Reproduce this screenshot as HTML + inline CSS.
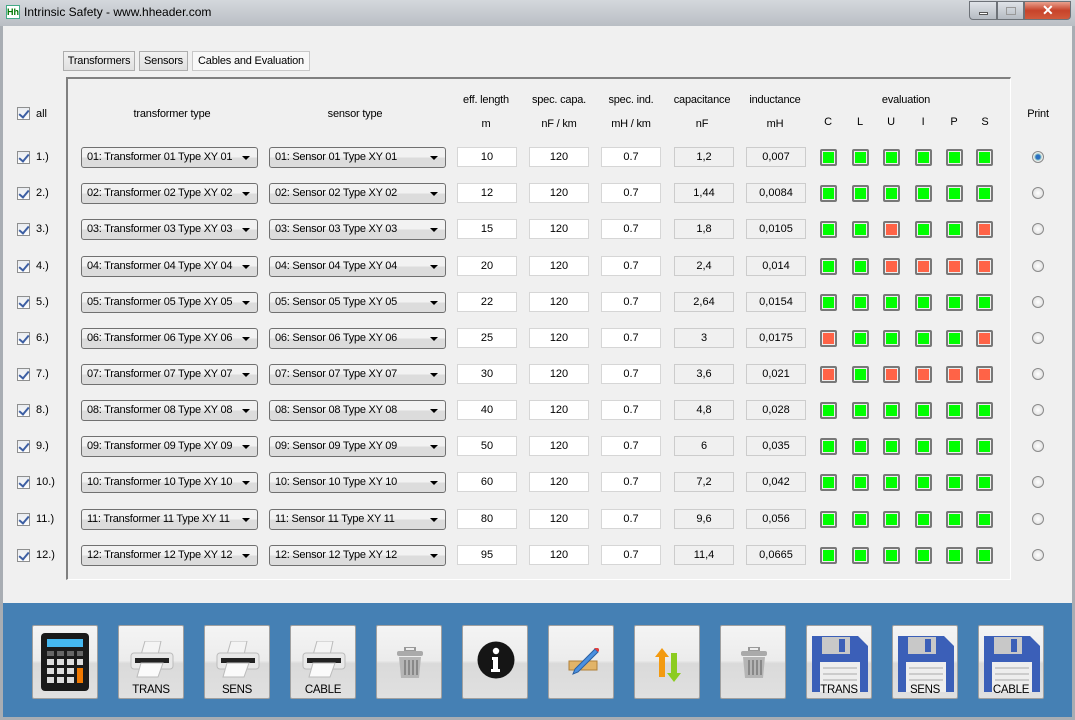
<!DOCTYPE html>
<html><head><meta charset="utf-8"><style>
*{box-sizing:border-box;margin:0;padding:0}
body{width:1075px;height:720px;overflow:hidden;font-family:"Liberation Sans",sans-serif;font-size:12px;color:#000;background:#f0f0f0;position:relative}
.a{position:absolute}
#tb{left:0;top:0;width:1075px;height:26px;background:linear-gradient(#d4d8dc,#b9bec4);}
#frame{left:0;top:26px;width:1075px;height:694px;border:3px solid #a8adb3;border-top:none;background:#f0f0f0}
.tab{top:51px;height:20px;border:1px solid #adadad;background:linear-gradient(#f2f2f2,#e0e0e0);font-size:11px;line-height:18px;text-align:center;letter-spacing:-0.2px}
#panel{left:66px;top:77px;width:945px;height:503px;border-left:2px solid #808080;border-top:2px solid #808080;border-right:1px solid #fff;border-bottom:1px solid #fff}
.h{font-size:11px;text-align:center;width:80px;letter-spacing:-0.2px}
.cb{width:13px;height:13px;border:1px solid #8e8f8f;background:linear-gradient(#e9ecf0,#fdfdfd)}
.cb:after{content:"";position:absolute;left:3px;top:0px;width:4px;height:8px;border:solid #3d5fa3;border-width:0 2px 2px 0;transform:rotate(40deg)}
.lb{font-size:11px}
.combo{height:21px;border:1px solid #707070;border-radius:3px;background:linear-gradient(#f2f2f2 50%,#dcdcdc 50%);font-size:11px;line-height:19px;padding-left:5px;width:177px;letter-spacing:-0.25px;white-space:nowrap}
.combo:after{content:"";position:absolute;right:7px;top:8px;border:4px solid transparent;border-top:4px solid #000;border-bottom:none}
.tx{height:20px;width:60px;border:1px solid #d6d6d6;background:#fff;text-align:center;line-height:18px;font-size:11px}
.ro{background:#f0f0f0;border-color:#ccc}
.ev{width:17px;height:17px;border:2px solid #787878;border-radius:2px;padding:1px;background:#eee}
.ev i{display:block;width:11px;height:11px;background:#00ff00}
.ev.r i{background:#ff6347}
.rd{width:12px;height:12px;border-radius:50%;border:1px solid #8a8a8a;background:radial-gradient(#fff,#d8d8d8)}
#blue{left:3px;top:603px;width:1069px;height:114px;background:#4580b4}
.btn{top:625px;width:66px;height:74px;border:1px solid #a0a0a0;border-radius:2px;background:linear-gradient(#f4f4f4 0,#ececec 48%,#dadada 52%,#e0e0e0 100%)}
.bl{position:absolute;bottom:2px;width:100%;text-align:center;font-size:11.5px;letter-spacing:-0.3px}
</style></head><body>
<div class="a" id="tb"></div>
<div class="a" style="left:6px;top:5px;width:14px;height:14px;background:#fff;border:1px solid #4a8;font-size:9px;line-height:12px;color:#070;text-align:center;font-weight:bold">Hh</div>
<div class="a" style="left:24px;top:5px;font-size:12px;">Intrinsic Safety - www.hheader.com</div>
<div class="a" style="left:969px;top:1px;width:28px;height:19px;border:1px solid #6d7278;border-radius:0 0 0 4px;background:linear-gradient(#dfe3e8,#b5bbc2)"><div class="a" style="left:9px;top:10px;width:9px;height:3px;background:#fff;border:1px solid #555"></div></div>
<div class="a" style="left:997px;top:1px;width:27px;height:19px;border:1px solid #6d7278;background:linear-gradient(#dfe3e8,#b5bbc2)"><div class="a" style="left:8px;top:5px;width:10px;height:8px;border:1px solid #999"></div></div>
<div class="a" style="left:1024px;top:1px;width:47px;height:19px;border:1px solid #6d7278;border-radius:0 0 4px 0;background:linear-gradient(#e9a08e,#c7432a 50%,#d15a3c)"><div class="a" style="left:17px;top:0px;color:#fff;font-weight:bold;font-size:14px">✕</div></div>
<div class="a" id="frame"></div>

<div class="a tab" style="left:63px;width:72px">Transformers</div>
<div class="a tab" style="left:139px;width:49px">Sensors</div>
<div class="a tab" style="left:192px;width:118px;background:#f8f8f8;border-color:#c8c8c8">Cables and Evaluation</div>
<div class="a" id="panel"></div>

<div class="a cb" style="left:17px;top:107px"></div><div class="a lb" style="left:36px;top:108px">all</div>
<div class="a h" style="left:122px;top:108px;width:100px">transformer type</div>
<div class="a h" style="left:305px;top:108px;width:100px">sensor type</div>
<div class="a h" style="left:446px;top:94px">eff. length</div><div class="a h" style="left:446px;top:118px">m</div>
<div class="a h" style="left:519px;top:94px">spec. capa.</div><div class="a h" style="left:519px;top:118px">nF / km</div>
<div class="a h" style="left:591px;top:94px">spec. ind.</div><div class="a h" style="left:591px;top:118px">mH / km</div>
<div class="a h" style="left:662px;top:94px">capacitance</div><div class="a h" style="left:662px;top:118px">nF</div>
<div class="a h" style="left:735px;top:94px">inductance</div><div class="a h" style="left:735px;top:118px">mH</div>
<div class="a h" style="left:866px;top:94px">evaluation</div>
<div class="a h" style="left:788px;top:116px">C</div><div class="a h" style="left:820px;top:116px">L</div><div class="a h" style="left:851px;top:116px">U</div><div class="a h" style="left:883px;top:116px">I</div><div class="a h" style="left:914px;top:116px">P</div><div class="a h" style="left:945px;top:116px">S</div>
<div class="a h" style="left:998px;top:108px">Print</div>

<!-- rows -->
<div class="a" style="left:0;top:147px;width:1075px;height:22px">
<div class="a cb" style="left:17px;top:4px"></div><div class="a lb" style="left:36px;top:4px">1.)</div>
<div class="a combo" style="left:81px">01: Transformer 01 Type XY 01</div><div class="a combo" style="left:269px">01: Sensor 01 Type XY 01</div>
<div class="a tx" style="left:457px">10</div><div class="a tx" style="left:529px">120</div><div class="a tx" style="left:601px">0.7</div><div class="a tx ro" style="left:674px">1,2</div><div class="a tx ro" style="left:746px">0,007</div>
<div class="a ev" style="left:820px;top:2px"><i></i></div><div class="a ev" style="left:852px;top:2px"><i></i></div><div class="a ev" style="left:883px;top:2px"><i></i></div><div class="a ev" style="left:915px;top:2px"><i></i></div><div class="a ev" style="left:946px;top:2px"><i></i></div><div class="a ev" style="left:976px;top:2px"><i></i></div>
<div class="a rd" style="left:1032px;top:4px;background:radial-gradient(#2a6fc0 30%,#9cc 45%,#eee 60%)"></div></div>

<div class="a" style="left:0;top:183px;width:1075px;height:22px">
<div class="a cb" style="left:17px;top:4px"></div><div class="a lb" style="left:36px;top:4px">2.)</div>
<div class="a combo" style="left:81px">02: Transformer 02 Type XY 02</div><div class="a combo" style="left:269px">02: Sensor 02 Type XY 02</div>
<div class="a tx" style="left:457px">12</div><div class="a tx" style="left:529px">120</div><div class="a tx" style="left:601px">0.7</div><div class="a tx ro" style="left:674px">1,44</div><div class="a tx ro" style="left:746px">0,0084</div>
<div class="a ev" style="left:820px;top:2px"><i></i></div><div class="a ev" style="left:852px;top:2px"><i></i></div><div class="a ev" style="left:883px;top:2px"><i></i></div><div class="a ev" style="left:915px;top:2px"><i></i></div><div class="a ev" style="left:946px;top:2px"><i></i></div><div class="a ev" style="left:976px;top:2px"><i></i></div>
<div class="a rd" style="left:1032px;top:4px"></div></div>

<div class="a" style="left:0;top:219px;width:1075px;height:22px">
<div class="a cb" style="left:17px;top:4px"></div><div class="a lb" style="left:36px;top:4px">3.)</div>
<div class="a combo" style="left:81px">03: Transformer 03 Type XY 03</div><div class="a combo" style="left:269px">03: Sensor 03 Type XY 03</div>
<div class="a tx" style="left:457px">15</div><div class="a tx" style="left:529px">120</div><div class="a tx" style="left:601px">0.7</div><div class="a tx ro" style="left:674px">1,8</div><div class="a tx ro" style="left:746px">0,0105</div>
<div class="a ev" style="left:820px;top:2px"><i></i></div><div class="a ev" style="left:852px;top:2px"><i></i></div><div class="a ev r" style="left:883px;top:2px"><i></i></div><div class="a ev" style="left:915px;top:2px"><i></i></div><div class="a ev" style="left:946px;top:2px"><i></i></div><div class="a ev r" style="left:976px;top:2px"><i></i></div>
<div class="a rd" style="left:1032px;top:4px"></div></div>

<div class="a" style="left:0;top:256px;width:1075px;height:22px">
<div class="a cb" style="left:17px;top:4px"></div><div class="a lb" style="left:36px;top:4px">4.)</div>
<div class="a combo" style="left:81px">04: Transformer 04 Type XY 04</div><div class="a combo" style="left:269px">04: Sensor 04 Type XY 04</div>
<div class="a tx" style="left:457px">20</div><div class="a tx" style="left:529px">120</div><div class="a tx" style="left:601px">0.7</div><div class="a tx ro" style="left:674px">2,4</div><div class="a tx ro" style="left:746px">0,014</div>
<div class="a ev" style="left:820px;top:2px"><i></i></div><div class="a ev" style="left:852px;top:2px"><i></i></div><div class="a ev r" style="left:883px;top:2px"><i></i></div><div class="a ev r" style="left:915px;top:2px"><i></i></div><div class="a ev r" style="left:946px;top:2px"><i></i></div><div class="a ev r" style="left:976px;top:2px"><i></i></div>
<div class="a rd" style="left:1032px;top:4px"></div></div>

<div class="a" style="left:0;top:292px;width:1075px;height:22px">
<div class="a cb" style="left:17px;top:4px"></div><div class="a lb" style="left:36px;top:4px">5.)</div>
<div class="a combo" style="left:81px">05: Transformer 05 Type XY 05</div><div class="a combo" style="left:269px">05: Sensor 05 Type XY 05</div>
<div class="a tx" style="left:457px">22</div><div class="a tx" style="left:529px">120</div><div class="a tx" style="left:601px">0.7</div><div class="a tx ro" style="left:674px">2,64</div><div class="a tx ro" style="left:746px">0,0154</div>
<div class="a ev" style="left:820px;top:2px"><i></i></div><div class="a ev" style="left:852px;top:2px"><i></i></div><div class="a ev" style="left:883px;top:2px"><i></i></div><div class="a ev" style="left:915px;top:2px"><i></i></div><div class="a ev" style="left:946px;top:2px"><i></i></div><div class="a ev" style="left:976px;top:2px"><i></i></div>
<div class="a rd" style="left:1032px;top:4px"></div></div>

<div class="a" style="left:0;top:328px;width:1075px;height:22px">
<div class="a cb" style="left:17px;top:4px"></div><div class="a lb" style="left:36px;top:4px">6.)</div>
<div class="a combo" style="left:81px">06: Transformer 06 Type XY 06</div><div class="a combo" style="left:269px">06: Sensor 06 Type XY 06</div>
<div class="a tx" style="left:457px">25</div><div class="a tx" style="left:529px">120</div><div class="a tx" style="left:601px">0.7</div><div class="a tx ro" style="left:674px">3</div><div class="a tx ro" style="left:746px">0,0175</div>
<div class="a ev r" style="left:820px;top:2px"><i></i></div><div class="a ev" style="left:852px;top:2px"><i></i></div><div class="a ev" style="left:883px;top:2px"><i></i></div><div class="a ev" style="left:915px;top:2px"><i></i></div><div class="a ev" style="left:946px;top:2px"><i></i></div><div class="a ev r" style="left:976px;top:2px"><i></i></div>
<div class="a rd" style="left:1032px;top:4px"></div></div>

<div class="a" style="left:0;top:364px;width:1075px;height:22px">
<div class="a cb" style="left:17px;top:4px"></div><div class="a lb" style="left:36px;top:4px">7.)</div>
<div class="a combo" style="left:81px">07: Transformer 07 Type XY 07</div><div class="a combo" style="left:269px">07: Sensor 07 Type XY 07</div>
<div class="a tx" style="left:457px">30</div><div class="a tx" style="left:529px">120</div><div class="a tx" style="left:601px">0.7</div><div class="a tx ro" style="left:674px">3,6</div><div class="a tx ro" style="left:746px">0,021</div>
<div class="a ev r" style="left:820px;top:2px"><i></i></div><div class="a ev" style="left:852px;top:2px"><i></i></div><div class="a ev r" style="left:883px;top:2px"><i></i></div><div class="a ev r" style="left:915px;top:2px"><i></i></div><div class="a ev r" style="left:946px;top:2px"><i></i></div><div class="a ev r" style="left:976px;top:2px"><i></i></div>
<div class="a rd" style="left:1032px;top:4px"></div></div>

<div class="a" style="left:0;top:400px;width:1075px;height:22px">
<div class="a cb" style="left:17px;top:4px"></div><div class="a lb" style="left:36px;top:4px">8.)</div>
<div class="a combo" style="left:81px">08: Transformer 08 Type XY 08</div><div class="a combo" style="left:269px">08: Sensor 08 Type XY 08</div>
<div class="a tx" style="left:457px">40</div><div class="a tx" style="left:529px">120</div><div class="a tx" style="left:601px">0.7</div><div class="a tx ro" style="left:674px">4,8</div><div class="a tx ro" style="left:746px">0,028</div>
<div class="a ev" style="left:820px;top:2px"><i></i></div><div class="a ev" style="left:852px;top:2px"><i></i></div><div class="a ev" style="left:883px;top:2px"><i></i></div><div class="a ev" style="left:915px;top:2px"><i></i></div><div class="a ev" style="left:946px;top:2px"><i></i></div><div class="a ev" style="left:976px;top:2px"><i></i></div>
<div class="a rd" style="left:1032px;top:4px"></div></div>

<div class="a" style="left:0;top:436px;width:1075px;height:22px">
<div class="a cb" style="left:17px;top:4px"></div><div class="a lb" style="left:36px;top:4px">9.)</div>
<div class="a combo" style="left:81px">09: Transformer 09 Type XY 09</div><div class="a combo" style="left:269px">09: Sensor 09 Type XY 09</div>
<div class="a tx" style="left:457px">50</div><div class="a tx" style="left:529px">120</div><div class="a tx" style="left:601px">0.7</div><div class="a tx ro" style="left:674px">6</div><div class="a tx ro" style="left:746px">0,035</div>
<div class="a ev" style="left:820px;top:2px"><i></i></div><div class="a ev" style="left:852px;top:2px"><i></i></div><div class="a ev" style="left:883px;top:2px"><i></i></div><div class="a ev" style="left:915px;top:2px"><i></i></div><div class="a ev" style="left:946px;top:2px"><i></i></div><div class="a ev" style="left:976px;top:2px"><i></i></div>
<div class="a rd" style="left:1032px;top:4px"></div></div>

<div class="a" style="left:0;top:472px;width:1075px;height:22px">
<div class="a cb" style="left:17px;top:4px"></div><div class="a lb" style="left:36px;top:4px">10.)</div>
<div class="a combo" style="left:81px">10: Transformer 10 Type XY 10</div><div class="a combo" style="left:269px">10: Sensor 10 Type XY 10</div>
<div class="a tx" style="left:457px">60</div><div class="a tx" style="left:529px">120</div><div class="a tx" style="left:601px">0.7</div><div class="a tx ro" style="left:674px">7,2</div><div class="a tx ro" style="left:746px">0,042</div>
<div class="a ev" style="left:820px;top:2px"><i></i></div><div class="a ev" style="left:852px;top:2px"><i></i></div><div class="a ev" style="left:883px;top:2px"><i></i></div><div class="a ev" style="left:915px;top:2px"><i></i></div><div class="a ev" style="left:946px;top:2px"><i></i></div><div class="a ev" style="left:976px;top:2px"><i></i></div>
<div class="a rd" style="left:1032px;top:4px"></div></div>

<div class="a" style="left:0;top:509px;width:1075px;height:22px">
<div class="a cb" style="left:17px;top:4px"></div><div class="a lb" style="left:36px;top:4px">11.)</div>
<div class="a combo" style="left:81px">11: Transformer 11 Type XY 11</div><div class="a combo" style="left:269px">11: Sensor 11 Type XY 11</div>
<div class="a tx" style="left:457px">80</div><div class="a tx" style="left:529px">120</div><div class="a tx" style="left:601px">0.7</div><div class="a tx ro" style="left:674px">9,6</div><div class="a tx ro" style="left:746px">0,056</div>
<div class="a ev" style="left:820px;top:2px"><i></i></div><div class="a ev" style="left:852px;top:2px"><i></i></div><div class="a ev" style="left:883px;top:2px"><i></i></div><div class="a ev" style="left:915px;top:2px"><i></i></div><div class="a ev" style="left:946px;top:2px"><i></i></div><div class="a ev" style="left:976px;top:2px"><i></i></div>
<div class="a rd" style="left:1032px;top:4px"></div></div>

<div class="a" style="left:0;top:545px;width:1075px;height:22px">
<div class="a cb" style="left:17px;top:4px"></div><div class="a lb" style="left:36px;top:4px">12.)</div>
<div class="a combo" style="left:81px">12: Transformer 12 Type XY 12</div><div class="a combo" style="left:269px">12: Sensor 12 Type XY 12</div>
<div class="a tx" style="left:457px">95</div><div class="a tx" style="left:529px">120</div><div class="a tx" style="left:601px">0.7</div><div class="a tx ro" style="left:674px">11,4</div><div class="a tx ro" style="left:746px">0,0665</div>
<div class="a ev" style="left:820px;top:2px"><i></i></div><div class="a ev" style="left:852px;top:2px"><i></i></div><div class="a ev" style="left:883px;top:2px"><i></i></div><div class="a ev" style="left:915px;top:2px"><i></i></div><div class="a ev" style="left:946px;top:2px"><i></i></div><div class="a ev" style="left:976px;top:2px"><i></i></div>
<div class="a rd" style="left:1032px;top:4px"></div></div>

<div class="a" id="blue"></div>
<!-- buttons -->
<div class="a btn" style="left:32px"><svg class="a" style="left:5px;top:6px" width="56" height="62"><rect x="3" y="1" width="48" height="58" rx="4" fill="#1a1a1a"/><rect x="9" y="7" width="36" height="8" fill="#45b8f0"/><g fill="#666"><rect x="9" y="19" width="7" height="5"/><rect x="19" y="19" width="7" height="5"/><rect x="29" y="19" width="7" height="5"/><rect x="39" y="19" width="6" height="5"/></g><g fill="#ddd"><rect x="9" y="27" width="7" height="6"/><rect x="19" y="27" width="7" height="6"/><rect x="29" y="27" width="7" height="6"/><rect x="39" y="27" width="6" height="6"/><rect x="9" y="36" width="7" height="6"/><rect x="19" y="36" width="7" height="6"/><rect x="29" y="36" width="7" height="6"/><rect x="9" y="45" width="7" height="6"/><rect x="19" y="45" width="7" height="6"/><rect x="29" y="45" width="7" height="6"/></g><rect x="39" y="36" width="6" height="15" fill="#f07800"/></svg></div>
<div class="a btn" style="left:118px"><svg class="a" style="left:10px;top:15px" width="46" height="40"><path d="M16 0h16l-3 14H12z" fill="#f4f4f4" stroke="#bbb"/><rect x="2" y="12" width="42" height="16" rx="3" fill="#e8e8e8" stroke="#bbb"/><rect x="6" y="17" width="34" height="5" fill="#222"/><path d="M12 22h22l-5 14H8z" fill="#fafafa" stroke="#bbb"/></svg><div class="bl">TRANS</div></div>
<div class="a btn" style="left:204px"><svg class="a" style="left:10px;top:15px" width="46" height="40"><path d="M16 0h16l-3 14H12z" fill="#f4f4f4" stroke="#bbb"/><rect x="2" y="12" width="42" height="16" rx="3" fill="#e8e8e8" stroke="#bbb"/><rect x="6" y="17" width="34" height="5" fill="#222"/><path d="M12 22h22l-5 14H8z" fill="#fafafa" stroke="#bbb"/></svg><div class="bl">SENS</div></div>
<div class="a btn" style="left:290px"><svg class="a" style="left:10px;top:15px" width="46" height="40"><path d="M16 0h16l-3 14H12z" fill="#f4f4f4" stroke="#bbb"/><rect x="2" y="12" width="42" height="16" rx="3" fill="#e8e8e8" stroke="#bbb"/><rect x="6" y="17" width="34" height="5" fill="#222"/><path d="M12 22h22l-5 14H8z" fill="#fafafa" stroke="#bbb"/></svg><div class="bl">CABLE</div></div>
<div class="a btn" style="left:376px"><svg class="a" style="left:19px;top:21px" width="28" height="32"><rect x="9" y="0" width="10" height="4" fill="none" stroke="#999" stroke-width="2"/><rect x="1" y="4" width="26" height="5" rx="2" fill="#aaa"/><path d="M3 10h22l-2 21H5z" fill="#b5b5b5"/><g stroke="#888" stroke-width="2"><path d="M9 13v15M13 13v15M17 13v15M21 13v15"/></g></svg></div>
<div class="a btn" style="left:462px"><svg class="a" style="left:14px;top:15px" width="38" height="38"><circle cx="19" cy="19" r="18.5" fill="#151515"/><circle cx="19" cy="10" r="3.2" fill="#fff"/><path d="M15 16h6v12h2v3h-9v-3h2v-9h-1z" fill="#fff"/></svg></div>
<div class="a btn" style="left:548px"><svg class="a" style="left:18px;top:22px" width="32" height="30"><rect x="2" y="13" width="28" height="9" fill="#e2b468" stroke="#b0803a"/><path d="M28 1l3 3-20 20-5 2 2-5z" fill="#4a90e0" stroke="#2a5fa0"/><path d="M27 0l4 4 2-2-4-4z" fill="#e04040"/></svg></div>
<div class="a btn" style="left:634px"><svg class="a" style="left:20px;top:22px" width="28" height="34"><path d="M7 0l7 9h-4v20H4V9H0z" fill="#f39a10"/><path d="M19 34l-7-9h4V5h6v20h4z" fill="#8ccc20"/></svg></div>
<div class="a btn" style="left:720px"><svg class="a" style="left:19px;top:21px" width="28" height="32"><rect x="9" y="0" width="10" height="4" fill="none" stroke="#999" stroke-width="2"/><rect x="1" y="4" width="26" height="5" rx="2" fill="#aaa"/><path d="M3 10h22l-2 21H5z" fill="#b5b5b5"/><g stroke="#888" stroke-width="2"><path d="M9 13v15M13 13v15M17 13v15M21 13v15"/></g></svg></div>
<div class="a btn" style="left:806px"><svg class="a" style="left:3px;top:8px" width="60" height="60"><path d="M2 2h46l10 10v46H2z" fill="#3b5fb8"/><rect x="12" y="3" width="28" height="17" fill="#c8c8c8"/><rect x="29" y="5" width="6" height="13" fill="#3b5fb8"/><rect x="10" y="28" width="40" height="30" fill="#eee"/><g stroke="#aaa"><path d="M13 34h34M13 40h34M13 46h34"/></g></svg><div class="bl">TRANS</div></div>
<div class="a btn" style="left:892px"><svg class="a" style="left:3px;top:8px" width="60" height="60"><path d="M2 2h46l10 10v46H2z" fill="#3b5fb8"/><rect x="12" y="3" width="28" height="17" fill="#c8c8c8"/><rect x="29" y="5" width="6" height="13" fill="#3b5fb8"/><rect x="10" y="28" width="40" height="30" fill="#eee"/><g stroke="#aaa"><path d="M13 34h34M13 40h34M13 46h34"/></g></svg><div class="bl">SENS</div></div>
<div class="a btn" style="left:978px"><svg class="a" style="left:3px;top:8px" width="60" height="60"><path d="M2 2h46l10 10v46H2z" fill="#3b5fb8"/><rect x="12" y="3" width="28" height="17" fill="#c8c8c8"/><rect x="29" y="5" width="6" height="13" fill="#3b5fb8"/><rect x="10" y="28" width="40" height="30" fill="#eee"/><g stroke="#aaa"><path d="M13 34h34M13 40h34M13 46h34"/></g></svg><div class="bl">CABLE</div></div>
</body></html>
